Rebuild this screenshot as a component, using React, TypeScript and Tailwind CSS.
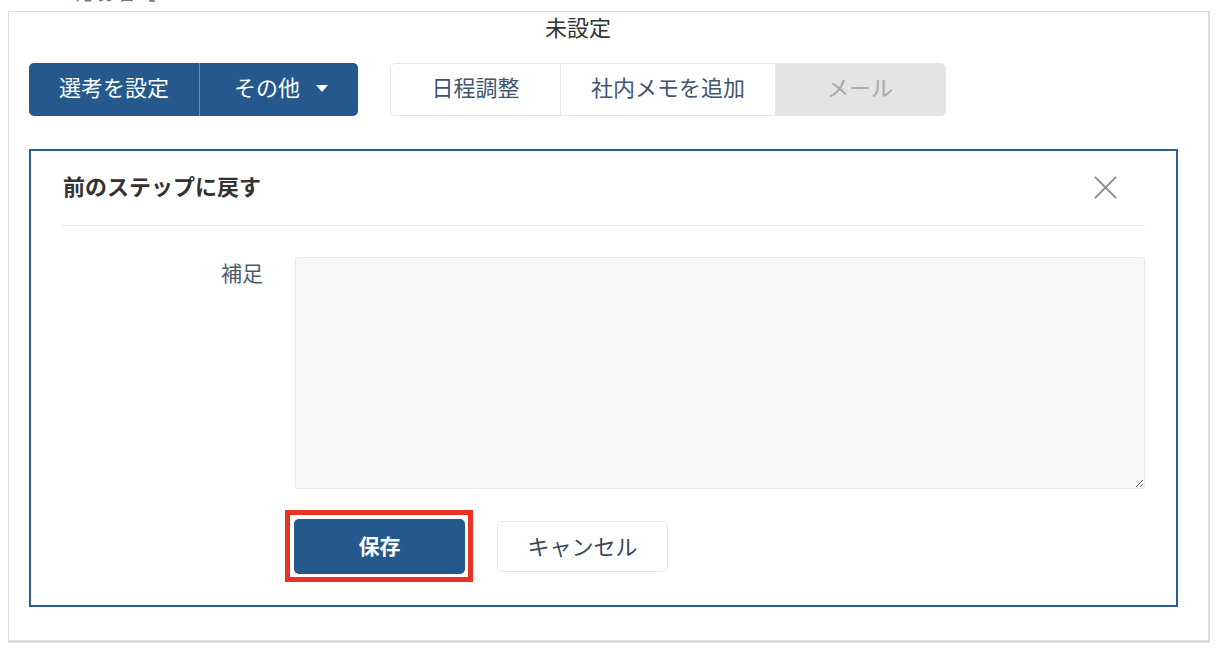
import React from "react";

const jp = { fontFamily: '"Noto Sans CJK JP", "Noto Sans", sans-serif' };

export default function App() {
  return (
    <div className="w-[1224px] h-[658px] bg-white overflow-hidden" style={jp}>
      <div className="h-[4px] overflow-hidden pl-[76px]">
        <div className="mt-[-20px] text-[20px] leading-[24px] text-[#777]">応募者【</div>
      </div>
      <div className="ml-[8px] mt-[7px] w-[1202px] h-[632px] border border-[#dddddd] border-r-2 border-b-[3px] bg-white">
        <div className="pl-[536px] mt-[-1px] text-[22px] leading-[30px] text-[#333]">未設定</div>
        <div className="mt-[22px] ml-[20px] flex items-center gap-[32px]">
          <div className="flex h-[53px] rounded-[5px] bg-[#25588c] text-white text-[22px] overflow-hidden">
            <div className="w-[171px] flex items-center justify-center pb-[7px] border-r border-[#6e8fb3]">選考を設定</div>
            <div className="w-[158px] flex items-center justify-center gap-[16px] pl-[4px] pb-[7px]">
              <span>その他</span>
              <svg width="12" height="8" viewBox="0 0 12 8" className="mt-[6px]">
                <path d="M0 0 L12 0 L6 7 Z" fill="white" />
              </svg>
            </div>
          </div>
          <div className="flex h-[53px] rounded-[5px] border border-[#e3e8ee] text-[22px] overflow-hidden">
            <div className="w-[170px] flex items-center justify-center pb-[7px] text-[#3f5671] border-r border-[#e3e8ee]">日程調整</div>
            <div className="w-[214px] flex items-center justify-center pb-[7px] text-[#3f5671]">社内メモを追加</div>
            <div className="w-[170px] flex items-center justify-center pb-[7px] bg-[#e4e4e4] text-[#a9a9a9]">メール</div>
          </div>
        </div>
        <div className="mt-[33px] ml-[20px] w-[1149px] h-[458px] border-2 border-[#2c5d95] px-[31px]">
          <div className="h-[75px] flex items-center justify-between border-b border-[#e6e6e6] pb-[5px]">
            <div className="pl-[1px] text-[22px] font-bold text-[#333]">前のステップに戻す</div>
            <svg width="25" height="25" viewBox="0 0 26 26" className="mr-[27px] mt-[3px]">
              <path d="M2 2 L24 24 M24 2 L2 24" stroke="#8a8a8a" strokeWidth="2" />
            </svg>
          </div>
          <div className="mt-[31px] flex gap-[32px]">
            <div className="w-[201px] text-right text-[21px] leading-[30px] text-[#4d5a68]">補足</div>
            <textarea className="w-[850px] h-[232px] bg-[#f7f7f7] border border-[#e9e9e9] rounded-[2px] outline-none" />
          </div>
          <div className="mt-[30px] ml-[232px] flex items-center gap-[32px]">
            <div className="relative">
              <div className="w-[171px] h-[55px] rounded-[5px] bg-[#25588c] text-white text-[21px] font-bold flex items-center justify-center pb-[2px]">保存</div>
              <div className="absolute -left-[9px] -top-[9px] -right-[8px] -bottom-[8px] border-[5px] border-[#e63323]" />
            </div>
            <div className="w-[171px] h-[51px] rounded-[5px] border border-[#e3e8ee] bg-white text-[22px] text-[#3a4a5c] flex items-center justify-center pb-[2px]">キャンセル</div>
          </div>
        </div>
      </div>
    </div>
  );
}
